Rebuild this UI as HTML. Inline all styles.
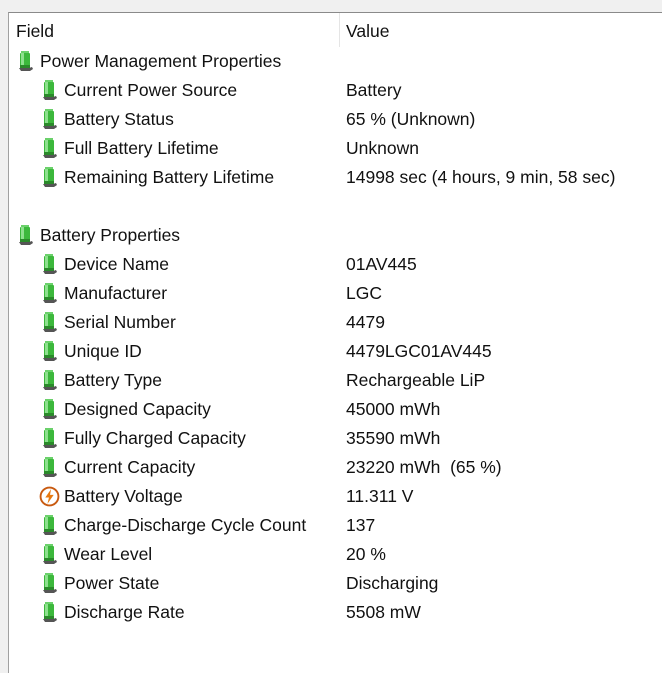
<!DOCTYPE html>
<html><head><style>
body{margin:0;width:662px;height:662px;background:#f0f0f0;overflow:hidden;font-family:"Liberation Sans",sans-serif;font-size:17.5px;color:#111}
#box{position:absolute;left:8px;top:12px;width:660px;height:660px;background:#fff;border-top:1px solid #8a8a8a;border-left:1px solid #a0a0a0}
.sep{position:absolute;left:330px;top:0;width:1px;height:34px;background:#e5e5e5}
.r{position:absolute;height:29px;line-height:29px;white-space:nowrap}
.ic{position:absolute;top:4px}
</style></head><body>
<div id="box">
<div class="sep"></div>
<div class="r" style="left:7px;top:4px">Field</div>
<div class="r" style="left:337px;top:4px">Value</div>
</div>
<svg width="0" height="0" style="position:absolute"><defs>
<symbol id="bat" viewBox="0 0 16 22">
<rect x="3" y="1" width="8" height="2" fill="#6bd16b"/>
<rect x="2" y="3" width="10" height="15" rx="1" fill="#3cb83c"/>
<rect x="3" y="3" width="3" height="15" fill="#8ee08e"/>
<rect x="2" y="15" width="10" height="3" fill="#2a8a2a"/>
<path d="M1 18 H11 L14 17 L15 19 L12 21 H3 Z" fill="#555"/>
</symbol>
<symbol id="volt" viewBox="0 0 20 20">
<circle cx="10" cy="10" r="8.5" fill="#fff" stroke="#c85a10" stroke-width="1.8"/>
<path d="M11.5 3 L6 11 H9.5 L8 17 L14 8.5 H10.5 Z" fill="#e87a10"/>
</symbol>
</defs></svg>
<div id="rows"></div>
<script>
var d=[[0,"Power Management Properties",""],[1,"Current Power Source","Battery"],[1,"Battery Status","65 % (Unknown)"],[1,"Full Battery Lifetime","Unknown"],[1,"Remaining Battery Lifetime","14998 sec (4 hours, 9 min, 58 sec)"],null,[0,"Battery Properties",""],[1,"Device Name","01AV445"],[1,"Manufacturer","LGC"],[1,"Serial Number","4479"],[1,"Unique ID","4479LGC01AV445"],[1,"Battery Type","Rechargeable LiP"],[1,"Designed Capacity","45000 mWh"],[1,"Fully Charged Capacity","35590 mWh"],[1,"Current Capacity","23220 mWh&nbsp; (65 %)"],[2,"Battery Voltage","11.311 V"],[1,"Charge-Discharge Cycle Count","137"],[1,"Wear Level","20 %"],[1,"Power State","Discharging"],[1,"Discharge Rate","5508 mW"]];
var h="";
d.forEach(function(e,i){if(!e)return;var y=47+29*i;var lv=e[0]==0?0:1;var ix=lv?42:18;var tx=lv?64:40;
var ic=e[0]==2?'<svg class="ic" style="left:'+(ix-3)+'px;top:'+(y+4)+'px" width="21" height="21"><use href="#volt"/></svg>':'<svg class="ic" style="left:'+ix+'px;top:'+(y+3)+'px" width="16" height="22"><use href="#bat"/></svg>';
h+=ic+'<div class="r" style="left:'+tx+'px;top:'+y+'px">'+e[1]+'</div><div class="r" style="left:346px;top:'+y+'px">'+e[2]+'</div>';});
document.getElementById("rows").innerHTML=h;
</script>
</body></html>
